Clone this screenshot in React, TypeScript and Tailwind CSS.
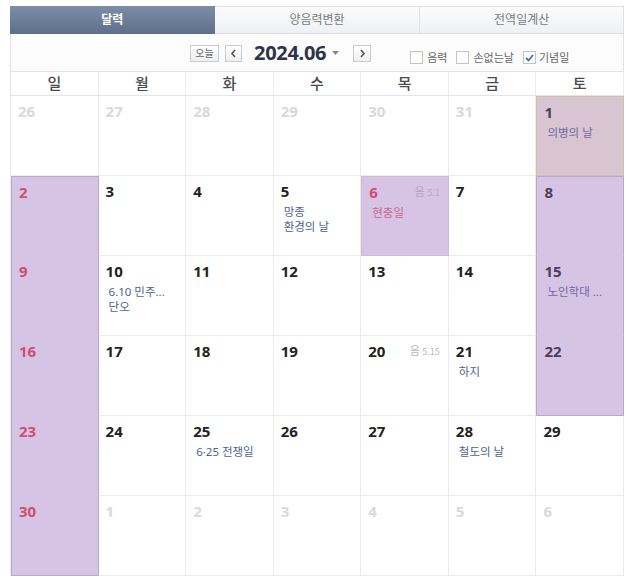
import React from "react";

type Cell = {
  d: number;
  out?: boolean;
  events?: string[];
  lunar?: string;
};

const weeks: Cell[][] = [
  [
    { d: 26, out: true },
    { d: 27, out: true },
    { d: 28, out: true },
    { d: 29, out: true },
    { d: 30, out: true },
    { d: 31, out: true },
    { d: 1, events: ["의병의 날"] },
  ],
  [
    { d: 2 },
    { d: 3 },
    { d: 4 },
    { d: 5, events: ["망종", "환경의 날"] },
    { d: 6, lunar: "5.1", events: ["현충일"] },
    { d: 7 },
    { d: 8 },
  ],
  [
    { d: 9 },
    { d: 10, events: ["6.10 민주...", "단오"] },
    { d: 11 },
    { d: 12 },
    { d: 13 },
    { d: 14 },
    { d: 15, events: ["노인학대 ..."] },
  ],
  [
    { d: 16 },
    { d: 17 },
    { d: 18 },
    { d: 19 },
    { d: 20, lunar: "5.15" },
    { d: 21, events: ["하지"] },
    { d: 22 },
  ],
  [
    { d: 23 },
    { d: 24 },
    { d: 25, events: ["6·25 전쟁일"] },
    { d: 26 },
    { d: 27 },
    { d: 28, events: ["철도의 날"] },
    { d: 29 },
  ],
  [
    { d: 30 },
    { d: 1, out: true },
    { d: 2, out: true },
    { d: 3, out: true },
    { d: 4, out: true },
    { d: 5, out: true },
    { d: 6, out: true },
  ],
];

const dayNames = ["일", "월", "화", "수", "목", "금", "토"];

// which cells are shaded, and where a run of shaded cells starts/ends
function shade(row: number, col: number): "none" | "today" | "top" | "mid" | "bottom" | "single" {
  if (row === 0 && col === 6) return "today";
  if (row === 1 && col === 4) return "single";
  if (col === 0 && row >= 1) return row === 1 ? "top" : row === 5 ? "bottom" : "mid";
  if (col === 6 && row >= 1 && row <= 3) return row === 1 ? "top" : row === 3 ? "bottom" : "mid";
  return "none";
}

function cellClass(s: ReturnType<typeof shade>) {
  switch (s) {
    case "today":
      return "bg-[#d8c5d1] border border-[#cbc4aa]";
    case "single":
      return "bg-[#d7c4e4] border border-[#cdbcdc]";
    case "top":
      return "bg-[#d6c4e4] border-l border-t border-r border-b border-[#b9a8cc] border-b-[#d6c4e4]";
    case "mid":
      return "bg-[#d6c4e4] border-l border-r border-b border-[#b9a8cc] border-b-[#d6c4e4]";
    case "bottom":
      return "bg-[#d6c4e4] border-l border-r border-b border-[#b9a8cc]";
    default:
      return "bg-white border-r border-b border-[#ececec]";
  }
}

function dateColor(c: Cell, col: number, s: string) {
  if (c.out) return "text-[#d9d9d9]";
  if (col === 0 || (col === 4 && c.d === 6)) return "text-[#d04d74]";
  if (s !== "none") return "text-[#4b3d5c]";
  return "text-[#222222]";
}

function eventColor(col: number, s: string) {
  if (s === "single") return "text-[#c7668c]";
  if (col === 6 && s !== "none") return "text-[#7466a6]";
  return "text-[#4c6392]";
}

export default function App() {
  return (
    <div
      className="w-[633px] h-[586px] bg-white pt-[6px] pl-[10px]"
      style={{ fontFamily: '"Noto Sans", "Noto Sans CJK KR", sans-serif' }}
    >
      <div className="w-[614px]">
        {/* tabs */}
        <div className="grid grid-cols-3 h-[28px] text-[12px]">
          <div className="flex items-center justify-center bg-linear-to-b from-[#7d8da6] to-[#5d6f8b] text-white font-bold">
            달력
          </div>
          <div className="flex items-center justify-center bg-linear-to-b from-[#fbfbfc] to-[#eff1f4] border-t border-b border-[#dde0e5] text-[#7a7a7a]">
            양음력변환
          </div>
          <div className="flex items-center justify-center bg-linear-to-b from-[#fbfbfc] to-[#eff1f4] border-t border-b border-l border-r border-[#dde0e5] text-[#7a7a7a]">
            전역일계산
          </div>
        </div>

        {/* toolbar */}
        <div className="h-[38px] flex items-start bg-[#fcfcfc] border-l border-r border-b border-[#e3e4e6] pl-[179px] pt-[11px]">
          <button className="w-[29px] h-[17px] border border-[#c9ccd1] bg-linear-to-b from-white to-[#efefef] text-[10px] leading-[15px] text-[#666]">
            오늘
          </button>
          <button className="ml-[6px] w-[17px] h-[17px] border border-[#c9ccd1] bg-linear-to-b from-white to-[#efefef] flex items-center justify-center">
            <svg width="7" height="9" viewBox="0 0 7 9">
              <path d="M5 1 L2 4.5 L5 8" fill="none" stroke="#555" strokeWidth="1.6" />
            </svg>
          </button>
          <div className="ml-[12px] -mt-[5px] text-[20px] font-bold text-[#2f3346] leading-[26px] tracking-[-0.3px]">
            2024.06
          </div>
          <svg className="ml-[6px] mt-[6px]" width="7" height="4" viewBox="0 0 7 4">
            <path d="M0 0 L7 0 L3.5 4 Z" fill="#8a8a8a" />
          </svg>
          <button className="ml-[14px] w-[18px] h-[17px] border border-[#c9ccd1] bg-linear-to-b from-white to-[#efefef] flex items-center justify-center">
            <svg width="7" height="9" viewBox="0 0 7 9">
              <path d="M2 1 L5 4.5 L2 8" fill="none" stroke="#555" strokeWidth="1.6" />
            </svg>
          </button>
          <div className="ml-[39px] mt-[6px] flex items-center text-[11px] text-[#666] leading-[13px]">
            <span className="w-[13px] h-[13px] border border-[#c4c4c4] bg-white" />
            <span className="ml-[4px]">음력</span>
            <span className="ml-[9px] w-[13px] h-[13px] border border-[#c4c4c4] bg-white" />
            <span className="ml-[4px]">손없는날</span>
            <span className="ml-[9px] w-[13px] h-[13px] border border-[#c4c4c4] bg-white flex items-center justify-center">
              <svg width="9" height="8" viewBox="0 0 9 8">
                <path d="M1 4 L3.5 6.5 L8 1" fill="none" stroke="#3b6fb6" strokeWidth="1.8" />
              </svg>
            </span>
            <span className="ml-[3px]">기념일</span>
          </div>
        </div>

        {/* weekday header */}
        <div className="grid grid-cols-7 h-[24px] border-l border-b border-[#e3e4e6] bg-white">
          {dayNames.map((n) => (
            <div
              key={n}
              className="border-r border-[#ececec] flex items-center justify-center text-[15px] text-[#4a4a4a] font-medium"
              style={{ fontFamily: '"Noto Sans CJK KR", sans-serif' }}
            >
              {n}
            </div>
          ))}
        </div>

        {/* days */}
        <div className="grid grid-cols-7 border-l border-[#ececec]">
          {weeks.map((week, r) =>
            week.map((c, col) => {
              const s = shade(r, col);
              return (
                <div key={`${r}-${col}`} className={`h-[80px] pl-[7px] pr-[8px] pt-[5px] ${cellClass(s)}`}>
                  <div className="flex items-start justify-between">
                    <span className={`text-[15px] font-bold leading-[20px] ${dateColor(c, col, s)}`}>{c.d}</span>
                    {c.lunar && (
                      <span
                        className={`mt-[2px] text-[11px] leading-[14px] ${s === "single" ? "text-[#b3a6c0]" : "text-[#b8b8b8]"}`}
                        style={{ fontFamily: '"Noto Sans CJK KR", sans-serif' }}
                      >
                        음 <span className="text-[9px]">{c.lunar}</span>
                      </span>
                    )}
                  </div>
                  {c.events && (
                    <div className={`mt-[3px] pl-[3px] text-[11.5px] leading-[15px] ${eventColor(col, s)}`}>
                      {c.events.map((e) => (
                        <div key={e} className="whitespace-nowrap h-[15px]">
                          {e}
                        </div>
                      ))}
                    </div>
                  )}
                </div>
              );
            })
          )}
        </div>
      </div>
    </div>
  );
}
